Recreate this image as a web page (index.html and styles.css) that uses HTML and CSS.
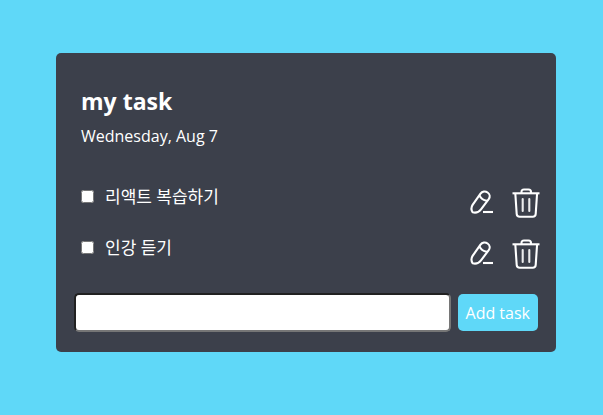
FILE: index.html
```
<!DOCTYPE html>
<html lang="ko">
<head>
<meta charset="utf-8">
<meta name="viewport" content="width=device-width, initial-scale=1">
<title>my task</title>
<link rel="stylesheet" href="styles.css">
</head>
<body>
<svg class="sprite" aria-hidden="true">
  <symbol id="pen" viewBox="0 0 26 26">
    <g fill="none" stroke="currentColor" stroke-width="2.1" stroke-linejoin="round">
      <path d="M11.500 3.700C13.200 1.400 16.300 0.900 18.600 2.500C20.900 4.100 21.300 6.900 19.700 9.200L11.800 19.600C9.700 22.300 6.500 23 3.600 22.300C2.100 19.900 2 17.500 3.600 14.900Z"/>
      <path d="M10.500 5.300C11.700 8.300 14.400 10.200 17.900 10.700"/>
      <path d="M14 22H24"/>
    </g>
  </symbol>
  <symbol id="trash" viewBox="0 0 28 30">
    <g fill="none" stroke="currentColor" stroke-width="2.100" stroke-linejoin="round">
      <path d="M0.500 5.300H27.500"/>
      <path d="M9.500 5.300V4Q9.500 1.500 12 1.500H16.500Q19 1.500 19 4V5.300"/>
      <path d="M3.300 5.300L4.700 26Q4.900 28.800 7.700 28.800H20.700Q23.500 28.800 23.700 26L25.100 5.300"/>
      <path d="M10.700 11V23M17.300 11V23" stroke-linecap="round" opacity="0.9"/>
    </g>
  </symbol>
</svg>
<main class="card">
  <header class="heading">
    <h1 class="title">my task</h1>
    <p class="date">Wednesday, Aug 7</p>
  </header>
  <ul class="tasks">
    <li class="task">
      <label class="task-label"><input class="check" type="checkbox">리액트 복습하기</label>
      <div class="actions">
        <button class="icon-button" type="button" aria-label="수정"><svg class="pen"><use href="#pen"/></svg></button>
        <button class="icon-button" type="button" aria-label="삭제"><svg class="trash"><use href="#trash"/></svg></button>
      </div>
    </li>
    <li class="task">
      <label class="task-label"><input class="check" type="checkbox">인강 듣기</label>
      <div class="actions">
        <button class="icon-button" type="button" aria-label="수정"><svg class="pen"><use href="#pen"/></svg></button>
        <button class="icon-button" type="button" aria-label="삭제"><svg class="trash"><use href="#trash"/></svg></button>
      </div>
    </li>
  </ul>
  <form class="add">
    <input class="add-input" type="text" aria-label="Add task">
    <button class="add-button" type="button">Add task</button>
  </form>
</main>
</body>
</html>
```
FILE: styles.css
```
* {
  box-sizing: border-box;
}

body {
  margin: 0;
  padding: 53px 47px 53px 56px;
  background: #5fd8f8;
  color: #fff;
  font-family: "Open Sans", "Noto Sans CJK KR", sans-serif;
  font-size: 16px;
  line-height: 24px;
}

.sprite {
  display: none;
}

.card {
  max-width: 500px;
  padding: 32px 16px 20px 18px;
  border-radius: 5px;
  background: #3c404b;
}

.heading {
  padding-left: 7px;
}

.title {
  margin: 0 0 7px;
  font-size: 23px;
  line-height: 32px;
}

.date {
  margin: 0;
}

.tasks {
  display: grid;
  gap: 21px;
  margin: 0 0 24px;
  padding: 40px 0 0 7px;
  list-style: none;
}

.task {
  display: flex;
  justify-content: space-between;
}

.task-label {
  display: flex;
  align-items: center;
  height: 17px;
  font-size: 17px;
}

.check {
  width: 13px;
  height: 13px;
  margin: 0 11px 0 0;
}

.actions {
  display: flex;
  align-items: center;
  gap: 17px;
}

.icon-button {
  padding: 0;
  border: 0;
  background: none;
  color: inherit;
}

.icon-button svg {
  display: block;
}

.pen {
  width: 26px;
  height: 26px;
}

.trash {
  width: 28px;
  height: 30px;
}

.add {
  display: flex;
  align-items: center;
  gap: 7px;
  padding-right: 2px;
}

.add-input {
  flex: 1;
  min-width: 0;
  height: 39px;
  padding: 4px 8px;
  border: 2px inset #767676;
  border-radius: 5px;
  font: inherit;
}

.add-button {
  height: 37px;
  padding: 0 8px;
  border: 0;
  border-radius: 5px;
  background: #5fd8f8;
  color: #fff;
  font: inherit;
}
```
